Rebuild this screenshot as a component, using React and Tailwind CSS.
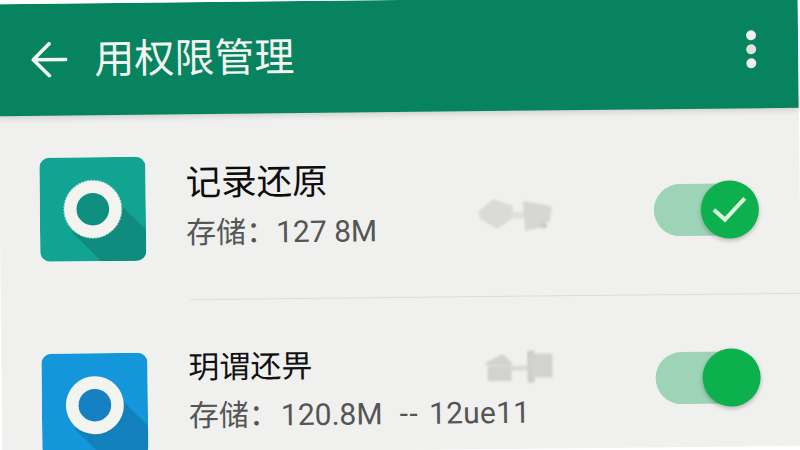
const CJK = 'font-["Roboto","Noto_Sans_CJK_SC",sans-serif]'

function AppIcon({ bg, shade, hole, scalloped, className }) {
  return (
    <svg viewBox="0 0 106 104" className={className}>
      <defs>
        <clipPath id={`clip-${hole}`}>
          <rect width="106" height="104" rx="10" />
        </clipPath>
      </defs>
      <g clipPath={`url(#clip-${hole})`}>
        <rect width="106" height="104" fill={bg} />
        <path d="M32 75 L72 39 L106 73 L106 104 L61 104 Z" fill={shade} />
        {scalloped && <circle cx="53" cy="52" r="29" fill="none" stroke="#f3f3f0" strokeWidth="0.8" strokeDasharray="1.6 1.6" />}
        <circle cx="53" cy="52" r={scalloped ? 28.8 : 29} fill="#f3f3f0" />
        <circle cx="53" cy="52" r="16.3" fill={hole} />
      </g>
    </svg>
  )
}

function Plug({ second }) {
  if (second) {
    return (
      <svg viewBox="0 0 72 36" className="w-[72px] h-[36px] blur-[1px]">
        <g fill="#d2d3d1">
          <path d="M2 14 L19 5 L29 14 L27 17 L2 16 Z" />
          <rect x="4" y="17" width="24" height="15" />
          <rect x="27" y="17" width="17" height="5" fill="#dadbd9" />
          <rect x="44" y="2" width="7" height="32" fill="#cbcccA" />
          <rect x="47" y="5" width="22" height="24" />
        </g>
      </svg>
    )
  }
  return (
    <svg viewBox="0 0 80 42" className="w-[80px] h-[42px] blur-[1px]">
      <g fill="#dadbd9">
        <path d="M2 17 L17 4 L37 11 L36 24 L21 34 L4 24 Z" />
        <path d="M36 17 L48 17 L48 24 L36 24 Z" fill="#e0e1df" />
        <path d="M47 6 L76 12 L74 27 L66 29 L66 33 L49 36 Z" fill="#d6d7d5" />
        <circle cx="68" cy="31" r="3" fill="#cacbc9" />
      </g>
    </svg>
  )
}

function Toggle({ check }) {
  return (
    <div className="relative w-[104px] h-[52px] rounded-full bg-[#9dd3b6]">
      <div className="absolute -right-[1px] -top-[3px] w-[58px] h-[58px] rounded-full bg-[#0cb04c] shadow-[0_2px_4px_rgba(0,0,0,0.25)] flex items-center justify-center">
        {check && (
          <svg viewBox="0 0 36 28" className="w-[36px] h-[28px]">
            <path d="M2 14 L13 24 L33 3" fill="none" stroke="#d8f3e1" strokeWidth="4" />
          </svg>
        )}
      </div>
    </div>
  )
}

export default function App() {
  return (
    <div className="w-[800px] h-[450px] overflow-hidden bg-white">
      <div className={`w-[800px] h-[450px] -rotate-[0.6deg] bg-[#f0f0ef] overflow-hidden ${CJK}`}>
        <header className="h-[112px] bg-[#07835f] flex items-center pl-[33px] pr-[42px] text-[#f3f5f1] shadow-[0_2px_6px_rgba(0,0,0,0.15)]">
          <svg viewBox="0 0 36 36" className="w-[36px] h-[36px]">
            <path d="M35 18 L3 18 M18 2 L2 18 L18 34" fill="none" stroke="currentColor" strokeWidth="3.6" strokeLinecap="round" strokeLinejoin="round" />
          </svg>
          <h1 className="ml-[27px] text-[40px] leading-none flex-1 pt-[2px]">用权限管理</h1>
          <div className="flex flex-col gap-[4px] -mt-[6px]">
            <span className="w-[10px] h-[10px] rounded-full bg-[#eef1ee]" />
            <span className="w-[10px] h-[10px] rounded-full bg-[#dfe3df]" />
            <span className="w-[10px] h-[10px] rounded-full bg-[#eef1ee]" />
          </div>
        </header>

        <section className="h-[185px] flex items-start pl-[40px] pt-[42px]">
          <AppIcon bg="#12a493" shade="#0f8c7e" hole="#0f8f80" scalloped className="w-[106px] h-[104px] shrink-0" />
          <div className="ml-[40px] w-[290px] pt-[5px]">
            <div className="text-[35.5px] leading-[44px] text-[#0c0c0c]">记录还原</div>
            <div className="text-[30px] leading-[44px] text-[#545655] mt-[6px]">存储：127 8M</div>
          </div>
          <div className="mt-[42px]"><Plug /></div>
          <div className="ml-[98px] mt-[33px]"><Toggle check /></div>
        </section>

        <div className="ml-[190px] h-[1px] bg-[#dcdcda]" />

        <section className="flex items-start pl-[40px] pt-[52px]">
          <AppIcon bg="#1497da" shade="#1280bd" hole="#1580c2" className="w-[106px] h-[104px] shrink-0" />
          <div className="ml-[41px] w-[310px] -mt-[6px]">
            <div className="text-[31px] leading-[44px] text-[#111111]">玥谓还畀</div>
            <div className="flex text-[30px] leading-[44px] text-[#545655] mt-[4px] whitespace-nowrap">
              <span className="mr-[2px]">存储：</span>
              <span>120.8M</span>
              <span className="ml-[17px] tracking-[1.5px]">--</span>
              <span className="ml-[10px] tracking-[0.2px]">12ue11</span>
            </div>
          </div>
          <div className="-ml-[15px]"><Plug second /></div>
          <div className="ml-[100px] mt-[5px]"><Toggle /></div>
        </section>
      </div>
    </div>
  )
}
